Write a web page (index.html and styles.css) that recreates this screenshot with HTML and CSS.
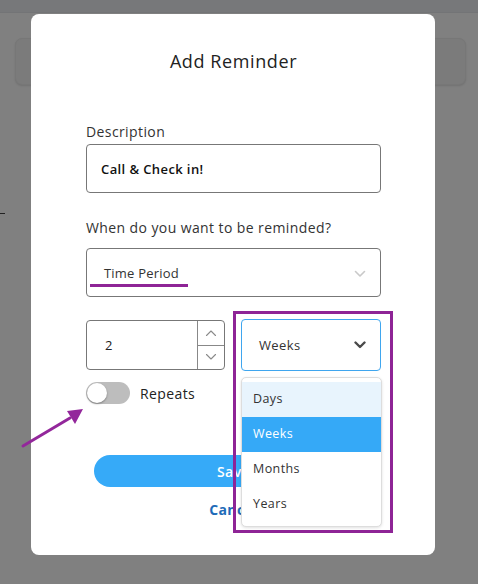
FILE: index.html
```html
<!DOCTYPE html>
<html lang="en">
<head>
<meta charset="utf-8">
<title>Add Reminder</title>
<link rel="stylesheet" href="styles.css">
</head>
<body>
<div class="page">
  <div class="topbar"></div>
  <div class="bgcard"></div>
  <div class="dash"></div>
</div>

<div class="modal">
  <h2 class="title">Add Reminder</h2>

  <label class="label label-desc">Description</label>
  <div class="field">Call &amp; Check in!</div>

  <label class="label label-when">When do you want to be reminded?</label>
  <div class="field select">
    <span class="underlined">Time Period</span>
    <svg class="chev chev-light" width="12" height="8" viewBox="0 0 12 8"><path d="M1.5 1.5 L6 6 L10.5 1.5" fill="none" stroke="#c9c9c9" stroke-width="1.6" stroke-linecap="round" stroke-linejoin="round"/></svg>
  </div>

  <div class="row">
    <div class="number">
      <span class="num-value">2</span>
      <div class="spinner">
        <div class="spin">
          <svg width="12" height="8" viewBox="0 0 12 8"><path d="M1.5 6.5 L6 2 L10.5 6.5" fill="none" stroke="#8a8a8a" stroke-width="1.1" stroke-linecap="round" stroke-linejoin="round"/></svg>
        </div>
        <div class="spin spin-down">
          <svg width="12" height="8" viewBox="0 0 12 8"><path d="M1.5 1.5 L6 6 L10.5 1.5" fill="none" stroke="#8a8a8a" stroke-width="1.1" stroke-linecap="round" stroke-linejoin="round"/></svg>
        </div>
      </div>
    </div>
    <div class="unit">
      <span>Weeks</span>
      <svg class="chev" width="12" height="8" viewBox="0 0 12 8"><path d="M1.5 1.5 L6 6 L10.5 1.5" fill="none" stroke="#4a4a4a" stroke-width="2.4" stroke-linecap="round" stroke-linejoin="round"/></svg>
    </div>
  </div>

  <div class="toggle-row">
    <div class="toggle"><div class="knob"></div></div>
    <span class="toggle-label">Repeats</span>
  </div>

  <button class="save">Save</button>
  <div class="cancel">Cancel</div>

  <ul class="menu">
    <li class="opt opt-hover">Days</li>
    <li class="opt opt-active">Weeks</li>
    <li class="opt">Months</li>
    <li class="opt">Years</li>
  </ul>
</div>

<div class="highlight"></div>
<svg class="arrow" width="90" height="60" viewBox="0 0 90 60">
  <line x1="23" y1="46" x2="70" y2="18" stroke="#93279b" stroke-width="3" stroke-linecap="round"/>
  <polygon points="83,9 67,11 75,24" fill="#93279b"/>
</svg>
</body>
</html>
```

FILE: styles.css
```css
* { box-sizing: border-box; }
html, body { margin: 0; padding: 0; }
body {
  width: 478px;
  height: 584px;
  background: #808080;
  font-family: "Open Sans", "Noto Sans", sans-serif;
  letter-spacing: 0.4px;
  position: relative;
  overflow: hidden;
}
.page { height: 584px; }
.topbar {
  height: 13px;
  background: #77787a;
  border-bottom: 1px solid #737476;
}
.bgcard {
  margin: 25px 12px 0 15px;
  height: 47px;
  border-radius: 7px;
  background: #7b7b7b;
  border: 1px solid #777;
  box-shadow: 0 1px 2px rgba(0,0,0,0.12);
}
.dash {
  margin-top: 128px;
  width: 5px;
  height: 1px;
  background: #222;
}

.modal {
  position: absolute;
  left: 31px;
  top: 14px;
  width: 404px;
  height: 541px;
  background: #fff;
  border-radius: 8px;
  padding: 35px 54px 0 55px;
  display: flex;
  flex-direction: column;
}
.title {
  margin: 0;
  font-size: 18px;
  line-height: 24px;
  font-weight: 500;
  color: #222;
  text-align: center;
  letter-spacing: 0.6px;
}
.label {
  display: block;
  font-size: 14px;
  line-height: 20px;
  color: #333;
}
.label-desc { margin-top: 49px; }
.label-when { margin-top: 25px; }
.field {
  height: 49px;
  margin-top: 2px;
  border: 1px solid #777;
  border-radius: 4px;
  display: flex;
  align-items: center;
  padding-left: 14px;
  font-size: 13px;
  font-weight: 600;
  color: #111;
}
.select {
  margin-top: 10px;
  padding: 0 14px 0 17px;
  justify-content: space-between;
  font-weight: 400;
  color: #333;
}
.underlined {
  position: relative;
  font-size: 13px;
  letter-spacing: 0.2px;
}
.underlined::after {
  content: "";
  position: absolute;
  left: -14px;
  top: 20px;
  width: 98px;
  height: 3px;
  background: #8e2496;
}
.chev-light { margin-top: 2px; }

.row {
  margin-top: 23px;
  display: flex;
  gap: 16px;
}
.number {
  width: 140px;
  height: 50px;
  border: 1px solid #777;
  border-radius: 4px;
  display: flex;
  align-items: stretch;
}
.num-value {
  flex: 1;
  display: flex;
  align-items: center;
  padding-left: 18px;
  font-size: 13px;
  color: #222;
}
.spinner {
  width: 27px;
  border-left: 1px solid #888;
  display: flex;
  flex-direction: column;
}
.spin {
  flex: 1;
  display: flex;
  align-items: center;
  justify-content: center;
}
.spin-down { border-top: 1px solid #888; }
.unit {
  width: 141px;
  height: 52px;
  margin-top: -1px;
  border: 1px solid #3fa6ef;
  border-radius: 4px;
  display: flex;
  align-items: center;
  justify-content: space-between;
  padding: 0 14px 0 17px;
  font-size: 13px;
  color: #333;
}

.toggle-row {
  margin-top: 11px;
  display: flex;
  align-items: center;
  gap: 10px;
}
.toggle {
  width: 44px;
  height: 22px;
  border-radius: 11px;
  background: #bdbdbd;
  position: relative;
}
.knob {
  position: absolute;
  left: 1px;
  top: 1px;
  width: 20px;
  height: 20px;
  border-radius: 50%;
  background: #fff;
  box-shadow: 0 1px 2px rgba(0,0,0,0.35);
}
.toggle-label {
  font-size: 14px;
  font-weight: 500;
  color: #222;
}

.save {
  margin: 51px auto 0;
  width: 280px;
  height: 32px;
  border: none;
  border-radius: 16px;
  background: #36aaf8;
  color: #fff;
  font-family: inherit;
  letter-spacing: inherit;
  font-size: 14px;
  font-weight: 600;
}
.cancel {
  margin-top: 13px;
  text-align: center;
  font-size: 14px;
  line-height: 20px;
  font-weight: 700;
  color: #1e6bb8;
}

.menu {
  position: absolute;
  left: 210px;
  top: 363px;
  width: 141px;
  margin: 0;
  padding: 4px 0;
  list-style: none;
  background: #fff;
  border: 1px solid #ddd;
  border-radius: 5px;
  box-shadow: 0 1px 3px rgba(0,0,0,0.12);
}
.opt {
  height: 35px;
  display: flex;
  align-items: center;
  padding-left: 11px;
  padding-bottom: 2px;
  font-size: 12.5px;
  color: #333;
}
.opt-hover { background: #e8f4fd; }
.opt-active { background: #35a9f7; color: #fff; }

.highlight {
  position: absolute;
  left: 233px;
  top: 311px;
  width: 160px;
  height: 222px;
  border: 3px solid #8e2496;
}
.arrow {
  position: absolute;
  left: 0;
  top: 400px;
}
```
